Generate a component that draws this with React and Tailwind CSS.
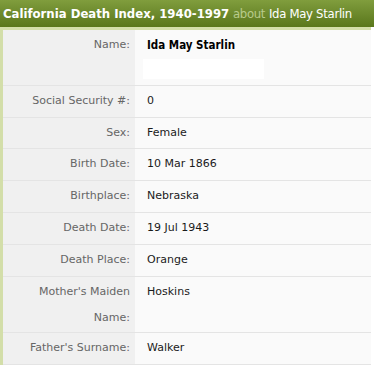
import React from "react";

const rows = [
  { label: "Social Security #:", value: "0" },
  { label: "Sex:", value: "Female" },
  { label: "Birth Date:", value: "10 Mar 1866" },
  { label: "Birthplace:", value: "Nebraska" },
  { label: "Death Date:", value: "19 Jul 1943" },
  { label: "Death Place:", value: "Orange" },
  { label: "Mother's Maiden Name:", value: "Hoskins" },
  { label: "Father's Surname:", value: "Walker" },
];

const Row = ({ label, children }) => (
  <div className="flex border-b border-[#e4e4e4]">
    <div className="w-[132px] shrink-0 bg-[#f0f0f0] pt-[2px] pr-[5px] pl-[20px] text-right leading-[26.8px] text-[#666]">
      {label}
    </div>
    <div className="flex-1 py-[2px] pl-[12px] leading-[26.8px] text-[#1a1a1a]">
      {children}
    </div>
  </div>
);

export default function App() {
  return (
    <div className="w-[374px] h-[366px] overflow-hidden bg-white font-['DejaVu_Sans',Verdana,sans-serif] text-[11px]">
      <div className="h-[27px] bg-gradient-to-b from-[#809d3d] to-[#5a771b] pl-[3px] leading-[27px] text-[13px] text-white whitespace-nowrap font-['DejaVu_Sans_Condensed','DejaVu_Sans',sans-serif]">
        <span className="font-bold">California Death Index, 1940-1997</span>{" "}
        <span className="text-[#b9cb8c] tracking-[-0.3px]">about</span>{" "}
        <span className="tracking-[-0.3px]">Ida May Starlin</span>
      </div>
      <div className="w-[371px] border-l-[3px] border-t-[3px] border-[#d3dea9] bg-[#fafafa]">
        <Row label="Name:">
          <div className="font-bold text-[11.5px] text-black font-['DejaVu_Sans_Condensed','DejaVu_Sans',sans-serif]">
            Ida May Starlin
          </div>
          <div className="mb-[4px] h-[20px] w-[121px] -ml-[4px] bg-white" />
        </Row>
        {rows.map((r) => (
          <Row key={r.label} label={r.label}>
            {r.value}
          </Row>
        ))}
      </div>
    </div>
  );
}
